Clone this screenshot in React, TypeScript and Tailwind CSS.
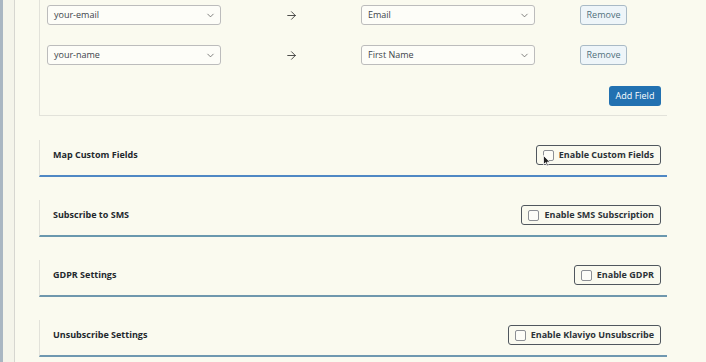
import { ArrowRight, ChevronDown } from "lucide-react";

const mappings = [
  { from: "your-email", to: "Email" },
  { from: "your-name", to: "First Name" },
];

const sections = [
  { title: "Map Custom Fields", label: "Enable Custom Fields", line: "border-[#4f88c4]", cursor: true },
  { title: "Subscribe to SMS", label: "Enable SMS Subscription", line: "border-[#6a98ae]" },
  { title: "GDPR Settings", label: "Enable GDPR", line: "border-[#6f97ad]" },
  { title: "Unsubscribe Settings", label: "Enable Klaviyo Unsubscribe", line: "border-[#6f98b0]" },
];

function Select({ value }: { value: string }) {
  return (
    <div className="flex h-[20px] w-[174px] items-center justify-between rounded-[3px] border border-[#bcbcbc] bg-[#fdfdf8] pl-[6px] pr-[4px] text-[9px] text-[#3c434a]">
      <span>{value}</span>
      <ChevronDown className="h-[11px] w-[11px] text-[#555]" strokeWidth={1.6} />
    </div>
  );
}

function Cursor() {
  return (
    <svg className="absolute left-[6px] top-[9px]" width="8" height="12" viewBox="0 0 8 12">
      <path d="M0.5 0.5 L0.5 9.5 L2.6 7.6 L4 11 L5.4 10.4 L4 7.2 L7 7.2 Z" fill="#222" stroke="#fff" strokeWidth="0.8" />
    </svg>
  );
}

export default function App() {
  return (
    <div
      className="flex h-[362px] w-[706px] overflow-hidden bg-[#fafaef] text-[#2c3338]"
      style={{ fontFamily: '"Open Sans", "Noto Sans", sans-serif' }}
    >
      <div className="w-[3px] bg-[#a9b6c2]" />
      <div className="w-[12px] border-r border-[#d6d6d0] bg-[#f4f4ea]" />

      <main className="flex-1 pl-[24px] pr-[39px]">
        <div className="border-b border-l border-[#e2e2da] pb-[9px] pl-[7px] pr-[6px] pt-[5px]">
          {mappings.map((m) => (
            <div key={m.from} className="mb-[20px] flex items-center">
              <Select value={m.from} />
              <div className="flex w-[140px] justify-center text-[#333]">
                <ArrowRight className="h-[13px] w-[13px]" strokeWidth={1.6} />
              </div>
              <Select value={m.to} />
              <button className="ml-[45px] h-[20px] w-[47px] rounded-[3px] border border-[#a9bac6] bg-[#eef5f9] text-[9px] text-[#50707c]">
                Remove
              </button>
            </div>
          ))}
          <div className="flex justify-end">
            <button className="mt-[1px] h-[20px] w-[52px] rounded-[3px] bg-[#2271b1] text-[9px] text-white">
              Add Field
            </button>
          </div>
        </div>

        {sections.map((s, i) => (
          <section
            key={s.title}
            className={`${i === 0 ? "mt-[24px]" : "mt-[23px]"} flex items-center justify-between border-b-2 border-l border-l-[#e2e2da] ${s.line} pb-[10px] pl-[13px] pr-[6px] pt-[5px]`}
          >
            <h2 className="text-[9px] font-bold text-[#23282d]">{s.title}</h2>
            <label className="relative flex h-[20px] items-center gap-[5px] rounded-[3px] border border-[#50575e] px-[6px] text-[9px] font-bold text-[#2c3338]">
              <span className="h-[11px] w-[11px] rounded-[2px] border border-[#8c8f94] bg-[#fdfdf8]" />
              {s.label}
              {s.cursor && <Cursor />}
            </label>
          </section>
        ))}
      </main>
    </div>
  );
}
